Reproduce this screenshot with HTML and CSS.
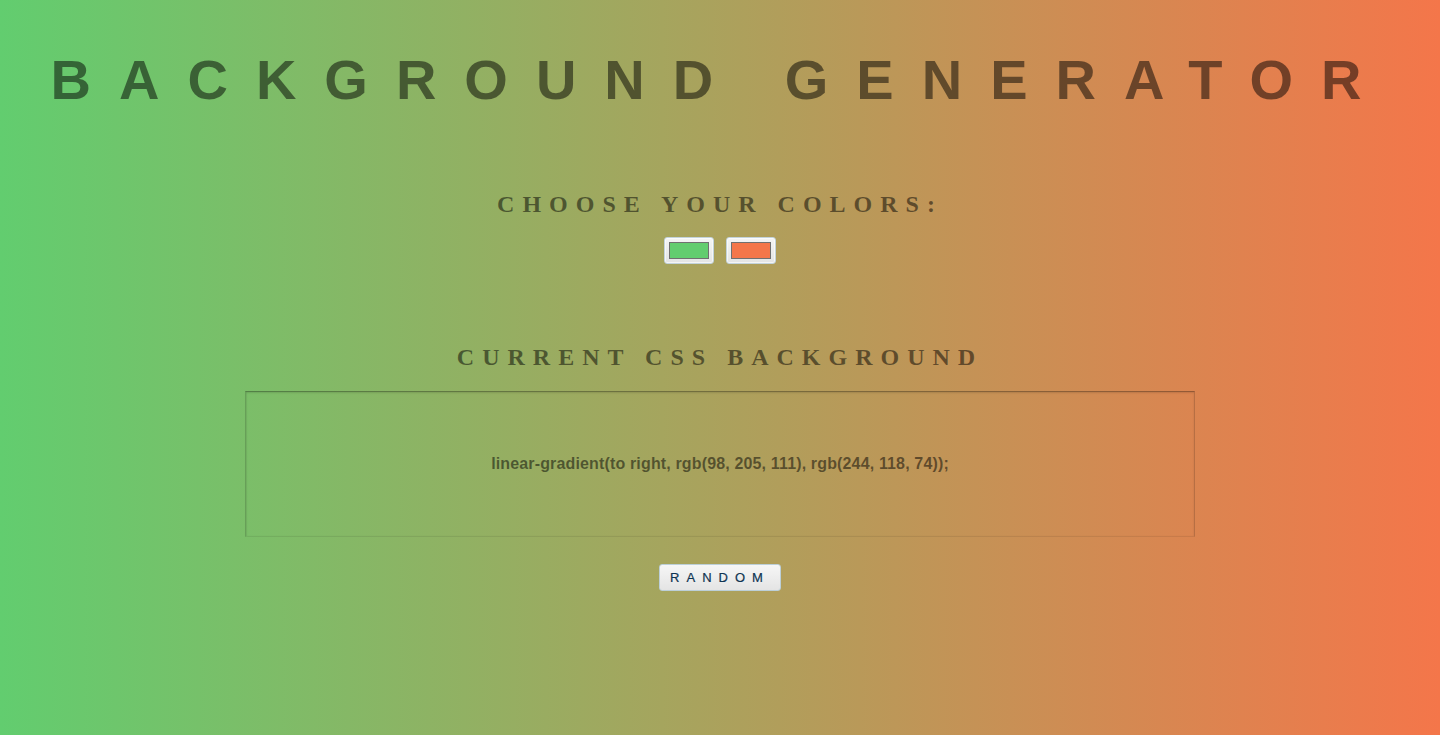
FILE: index.html
```html
<!DOCTYPE html>
<html lang="en">
<head>
<meta charset="utf-8">
<title>Background Generator</title>
<link rel="stylesheet" href="styles.css">
</head>
<body>
  <h1 class="title">Background Generator</h1>
  <h2 class="label label-choose">Choose your colors:</h2>
  <div class="pickers">
    <input class="picker" type="color" name="color1" value="#62cd6f">
    <input class="picker" type="color" name="color2" value="#f4764a">
  </div>
  <h2 class="label label-current">Current CSS Background</h2>
  <div class="output">
    <h3 class="output-text">linear-gradient(to right, rgb(98, 205, 111), rgb(244, 118, 74));</h3>
  </div>
  <button class="random" type="button">Random</button>
</body>
</html>
```

FILE: styles.css
```css
html {
  min-height: 100%;
  background: linear-gradient(to right, rgb(98, 205, 111), rgb(244, 118, 74));
}

body {
  margin: 0;
  padding: 0 0 40px;
  text-align: center;
  text-transform: uppercase;
  color: rgba(0, 0, 0, 0.5);
  font-family: "Liberation Sans", Arial, sans-serif;
}

.title {
  margin: 48px 0 0;
  font-family: "Liberation Sans", Arial, sans-serif;
  font-weight: 700;
  font-size: 56px;
  line-height: 64px;
  letter-spacing: 28px;
  color: rgba(0, 0, 0, 0.5);
}

.label {
  font-family: "Liberation Serif", "Times New Roman", serif;
  font-weight: 700;
  font-size: 24px;
  line-height: 27px;
  letter-spacing: 8px;
  color: rgba(0, 0, 0, 0.5);
}

.label-choose {
  margin: 79px 0 0;
}

.label-current {
  margin: 80px 0 0;
}

.pickers {
  display: flex;
  justify-content: center;
  gap: 12px;
  margin-top: 19px;
}

.picker {
  -webkit-appearance: none;
  appearance: none;
  box-sizing: border-box;
  width: 50px;
  height: 27px;
  margin: 0;
  padding: 4px;
  border: 1px solid #c3d3db;
  border-radius: 3px;
  background: linear-gradient(#f4f5f5, #e3e4e4);
  box-shadow: inset 0 0 0 1px rgba(255, 255, 255, 0.6);
  cursor: pointer;
}

.picker::-webkit-color-swatch-wrapper {
  padding: 0;
}

.picker::-webkit-color-swatch {
  border: 1px solid #707070;
  border-radius: 0;
}

.output {
  box-sizing: border-box;
  width: 950px;
  height: 146px;
  margin: 20px auto 0;
  display: flex;
  align-items: center;
  justify-content: center;
  border: 1px solid rgba(0, 0, 0, 0.16);
  border-top-color: rgba(0, 0, 0, 0.32);
  border-bottom-color: rgba(0, 0, 0, 0.08);
  box-shadow: inset 0 1px 2px rgba(0, 0, 0, 0.12), inset 1px 0 1px rgba(0, 0, 0, 0.05);
}

.output-text {
  margin: 0;
  font-family: "Liberation Sans", Arial, sans-serif;
  font-weight: 700;
  font-size: 16px;
  line-height: 18px;
  letter-spacing: 0.15px;
  text-transform: none;
  color: rgba(0, 0, 0, 0.5);
}

.random {
  box-sizing: border-box;
  height: 27px;
  margin-top: 27px;
  padding: 0 10px;
  border: 1px solid #bccfd8;
  border-radius: 3px;
  background: linear-gradient(#f6f6f6, #e4e4e4);
  font-family: "Liberation Sans", Arial, sans-serif;
  font-size: 13px;
  letter-spacing: 7px;
  text-transform: uppercase;
  color: #0f3452;
  -webkit-text-stroke: 0.2px #0f3452;
  cursor: pointer;
}
```
